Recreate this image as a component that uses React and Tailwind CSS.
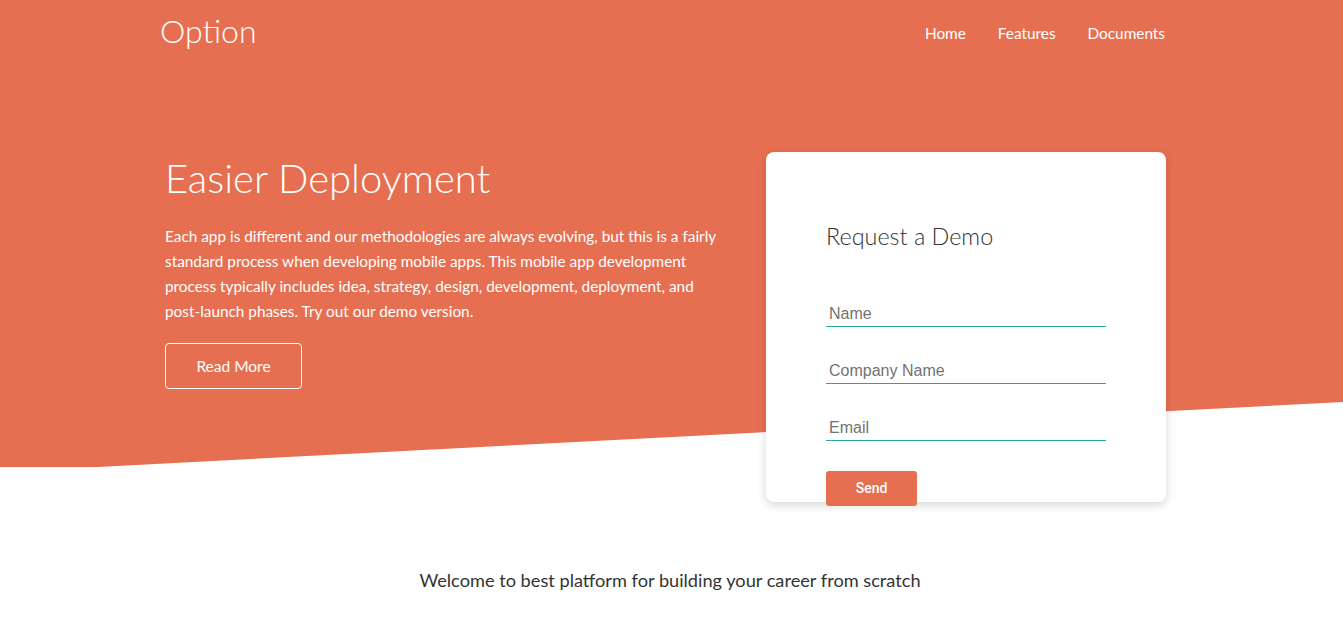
import React from "react";

export default function App() {
  return (
    <div className="relative min-h-[617px] bg-white overflow-hidden" style={{ fontFamily: "Lato, 'Open Sans', sans-serif" }}>
      <div className="absolute top-0 left-0 w-full h-[467px] bg-[#e76f51] [clip-path:polygon(0_0,100%_0,100%_402px,98px_467px,0_467px)]" />
      <div className="relative">
        <nav className="flex justify-between items-start ml-[160px] w-[1005px] h-[66px]">
          <a className="pt-[12px] text-[32px] leading-[1.2] font-light text-white">Option</a>
          <ul className="flex gap-[32px] pt-[24px] text-[15.35px] leading-[1.2] text-white">
            <li>Home</li>
            <li>Features</li>
            <li>Documents</li>
          </ul>
        </nav>
        <div className="flex justify-between ml-[165px] w-[1001px] mt-[86px]">
          <div className="pt-[2px] w-[555px]">
            <h1 className="text-[40px] leading-[1.2] font-light text-white">Easier Deployment</h1>
            <p className="mt-[22px] text-[15.35px] leading-[25px] text-white">
              Each app is different and our methodologies are always evolving, but this is a fairly standard process when developing mobile apps. This mobile app development process typically includes idea, strategy, design, development, deployment, and post-launch phases. Try out our demo version.
            </p>
            <button className="mt-[19px] w-[137px] h-[46px] pt-[2px] border border-white rounded-[4px] text-white text-[15.5px]">
              Read More
            </button>
          </div>
          <div className="w-[400px] h-[350px] bg-white rounded-[8px] shadow-[0_3px_10px_rgba(0,0,0,0.16)] pl-[60px] pt-[70px]">
            <h2 className="text-[23.4px] leading-[1.2] font-light text-[#333]">Request a Demo</h2>
            <div className="flex flex-col gap-[31px] mt-[51px] w-[280px]" style={{ fontFamily: "'Liberation Sans', Arial, sans-serif" }}>
              <input placeholder="Name" className="h-[26px] pt-[1px] pb-0 pl-[3px] border-b border-[#26a69a] text-[16px] outline-none placeholder:text-[#727272]" />
              <input placeholder="Company Name" className="h-[26px] pt-[1px] pb-0 pl-[3px] border-b border-[#26a69a] text-[16px] outline-none placeholder:text-[#727272]" />
              <input placeholder="Email" className="h-[26px] pt-[1px] pb-0 pl-[3px] border-b border-[#26a69a] text-[16px] outline-none placeholder:text-[#727272]" />
            </div>
            <button className="mt-[30px] w-[91px] h-[35px] bg-[#e76f51] rounded-[3px] text-white text-[14px] font-medium" style={{ fontFamily: "Roboto, sans-serif" }}>
              Send
            </button>
          </div>
        </div>
        <p className="mt-[65px] text-center text-[18.2px] text-[#333] pr-[3px]">
          Welcome to best platform for building your career from scratch
        </p>
      </div>
    </div>
  );
}
